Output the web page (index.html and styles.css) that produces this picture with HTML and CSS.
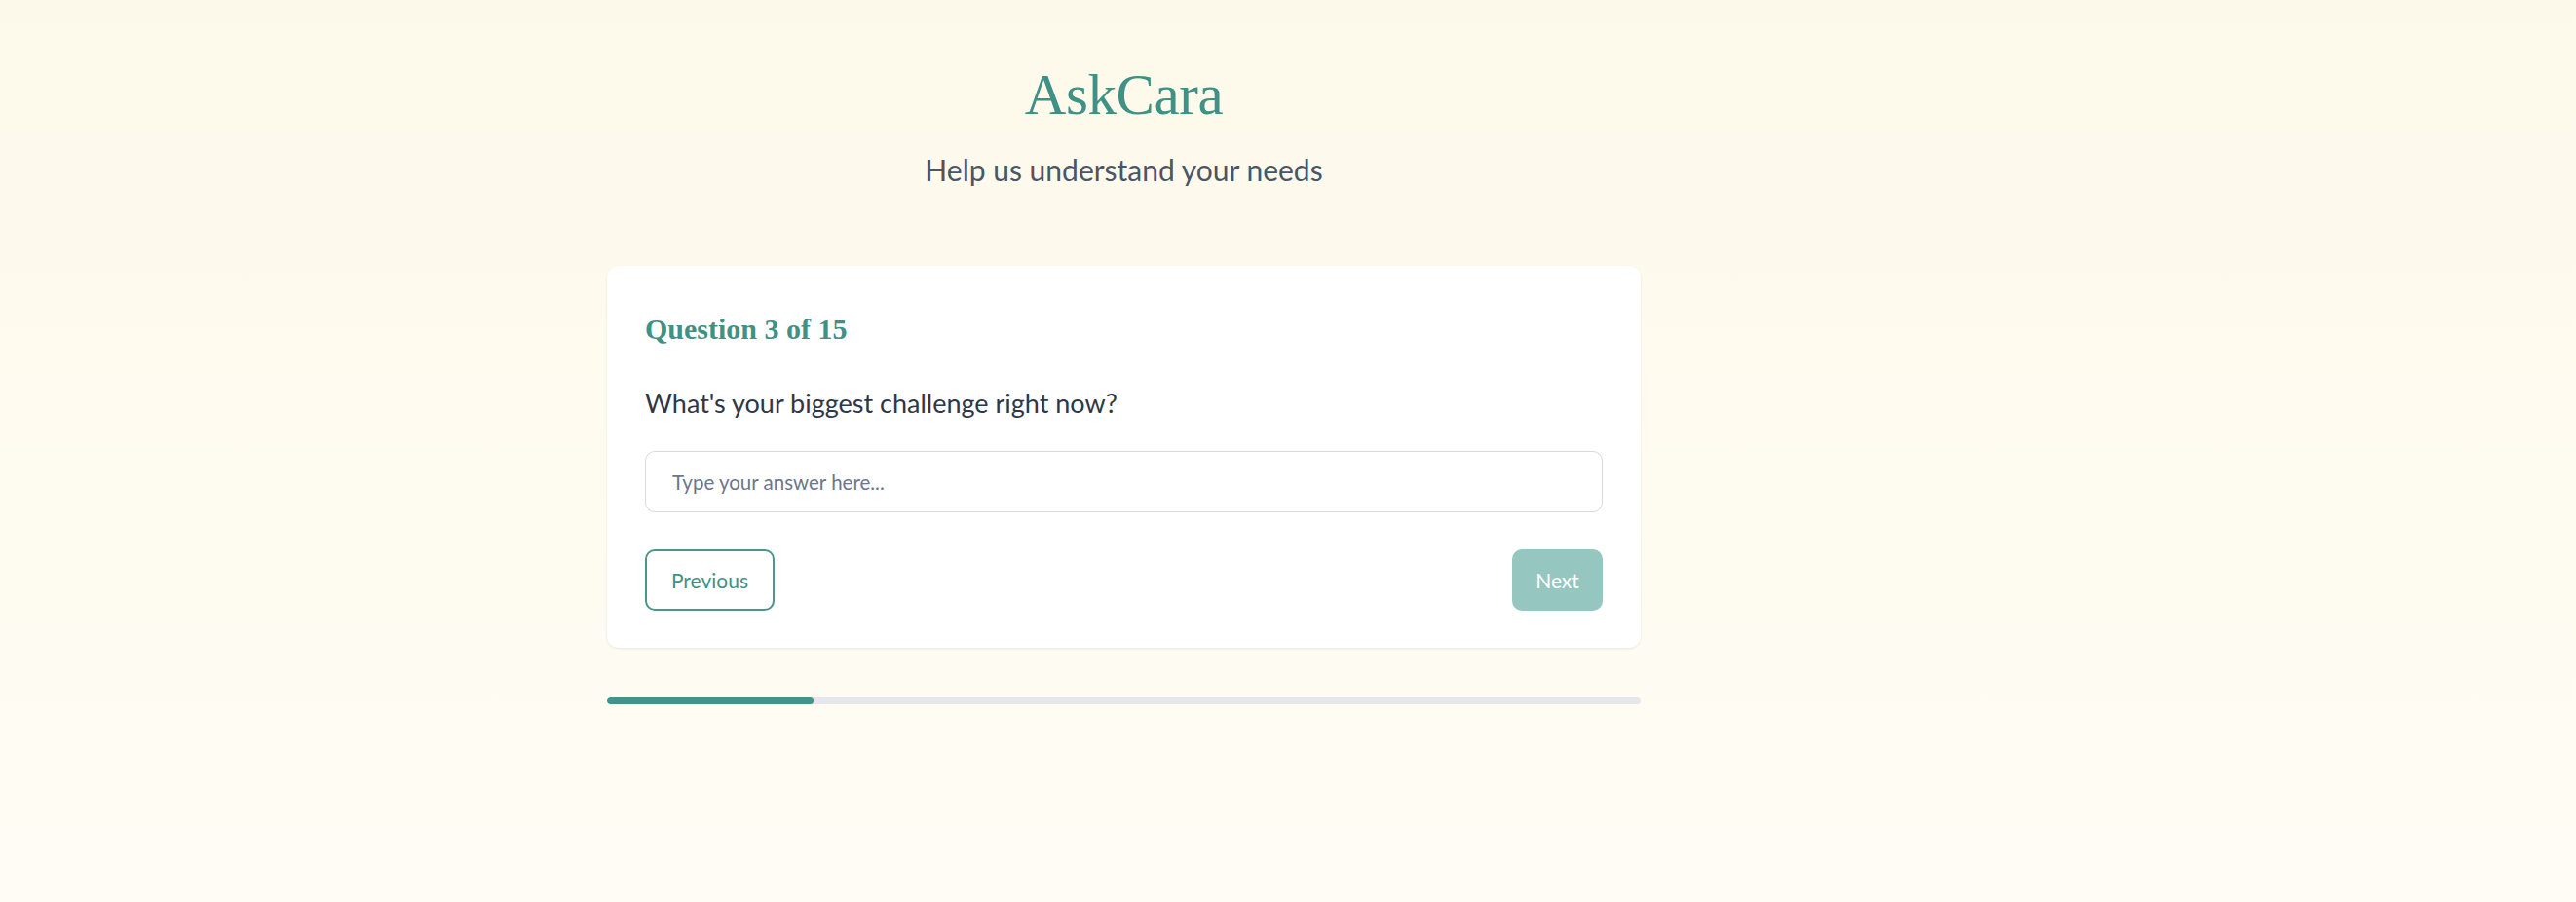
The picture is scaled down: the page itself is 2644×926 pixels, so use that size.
FILE: index.html
```html
<!DOCTYPE html>
<html lang="en">
<head>
<meta charset="utf-8">
<title>AskCara</title>
<link rel="stylesheet" href="styles.css">
</head>
<body>
<div class="page">
  <main class="wrap">
    <header class="header">
      <h1 class="brand">AskCara</h1>
      <p class="tagline">Help us understand your needs</p>
    </header>
    <section class="card">
      <h2 class="card-title">Question 3 of 15</h2>
      <p class="question">What's your biggest challenge right now?</p>
      <input class="answer" type="text" placeholder="Type your answer here...">
      <div class="actions">
        <button class="btn btn-outline" type="button">Previous</button>
        <button class="btn btn-solid" type="button">Next</button>
      </div>
    </section>
    <div class="progress"><div class="progress-fill" style="width: 20%"></div></div>
  </main>
</div>
</body>
</html>
```

FILE: styles.css
```css
* { box-sizing: border-box; }
html, body { margin: 0; padding: 0; }
body {
  min-height: 926px;
  background: linear-gradient(180deg, #fdf9ea 0%, #fefbf1 60%, #fffcf5 100%);
  font-family: Lato, "Noto Sans", sans-serif;
}
.page {
  width: 2307px;
  display: flex;
  justify-content: center;
}
.wrap {
  width: 1061px;
  padding-top: 68px;
  display: flex;
  flex-direction: column;
}
.header {
  display: flex;
  flex-direction: column;
  align-items: center;
}
.brand {
  margin: 0;
  font-family: "Liberation Serif", serif;
  font-weight: 400;
  font-size: 59px;
  line-height: 58px;
  color: #3f9186;
  letter-spacing: -0.4px;
}
.tagline {
  margin: 28px 0 0;
  font-size: 30px;
  line-height: 40px;
  color: #4a5565;
}
.card {
  margin-top: 79px;
  background: #ffffff;
  border-radius: 12px;
  padding: 0 39px 38px;
  box-shadow: 0 1px 3px rgba(0, 0, 0, 0.06), 0 1px 2px rgba(0, 0, 0, 0.03);
  display: flex;
  flex-direction: column;
}
.card-title {
  margin: 39px 0 0;
  font-family: "Liberation Serif", serif;
  font-weight: 700;
  font-size: 30px;
  line-height: 52px;
  color: #3f9186;
}
.question {
  margin: 32px 0 0;
  font-size: 27px;
  line-height: 36px;
  color: #2d3748;
}
.answer {
  margin-top: 31px;
  width: 100%;
  height: 63px;
  border: 1.5px solid #d6d9de;
  border-radius: 10px;
  padding: 0 27px;
  font-family: Lato, "Noto Sans", sans-serif;
  font-size: 20.5px;
  color: #2d3748;
  background: #fff;
  outline: none;
}
.answer::placeholder { color: #6b778b; }
.actions {
  margin-top: 38px;
  display: flex;
  justify-content: space-between;
}
.btn {
  height: 63px;
  border-radius: 10px;
  font-family: Lato, "Noto Sans", sans-serif;
  font-size: 21px;
  padding: 0;
  cursor: pointer;
}
.btn-outline {
  width: 133px;
  background: #fff;
  border: 2px solid #4a968d;
  color: #3f9186;
}
.btn-solid {
  width: 93px;
  background: #96c6c0;
  border: none;
  color: #ffffff;
}
.progress {
  margin-top: 51px;
  height: 7px;
  border-radius: 4px;
  background: #e5e7eb;
  overflow: hidden;
}
.progress-fill {
  height: 100%;
  background: #44928a;
  border-radius: 4px;
}
```
